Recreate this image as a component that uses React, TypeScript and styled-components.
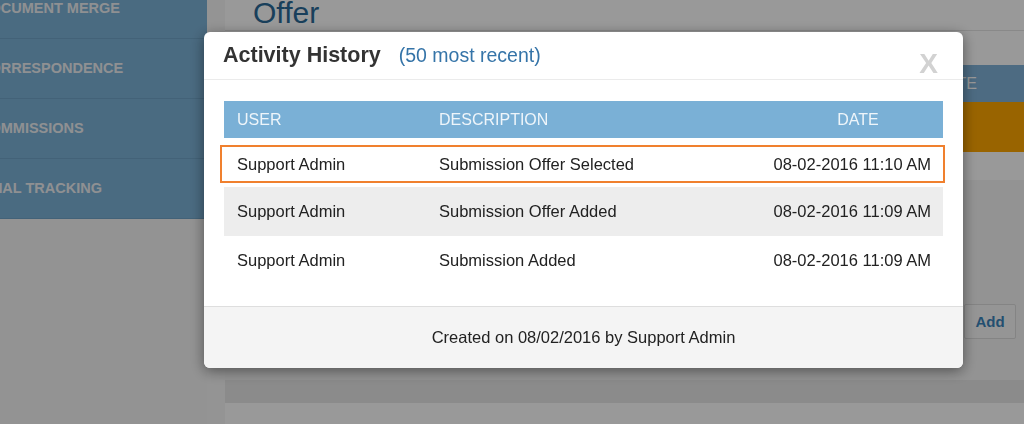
import React from 'react'
import styled, { createGlobalStyle } from 'styled-components'

const GlobalStyle = createGlobalStyle`
  html, body {
    margin: 0;
    padding: 0;
  }

  body {
    font-family: 'Liberation Sans', Arial, sans-serif;
    background: #fff;
    overflow: hidden;
  }
`

const Page = styled.div`
  display: flex;
  width: 1024px;
  height: 424px;
  overflow: hidden;
`

const Sidebar = styled.aside`
  width: 207px;
  flex-shrink: 0;
  background: #f5f5f5;
  overflow: hidden;
`

const NavList = styled.ul`
  list-style: none;
  margin: -21px 0 0;
  padding: 0;
  background: #7cb2d7;
`

const NavItem = styled.li`
  height: 59px;
  line-height: 59px;
  border-bottom: 1px solid #70a4c8;
  color: #eef1f4;
  font-size: 14.5px;
  font-weight: bold;
  text-transform: uppercase;
  white-space: nowrap;
  text-indent: -21px;
`

const Main = styled.main`
  flex: 1;
  display: flex;
  padding-left: 18px;
  background: #f7f7f7;
`

const Content = styled.section`
  flex: 1;
  display: flex;
  flex-direction: column;
  background: #fff;
  overflow: hidden;
`

const TitleBar = styled.header`
  height: 30px;
  padding-left: 28px;
  border-bottom: 1px solid #e4e4e4;
  overflow: hidden;
`

const PageTitle = styled.h1`
  margin: -6px 0 0;
  font-size: 30px;
  line-height: 38px;
  font-weight: normal;
  color: #2b6a98;
`

const OfferTable = styled.div`
  margin: 34px 0 0 28px;
  display: flex;
  flex-direction: column;
`

const OfferHead = styled.div`
  height: 37px;
  display: flex;
  align-items: center;
  justify-content: flex-end;
  padding-right: 47px;
  background: #80b3d9;
  color: #fff;
  font-size: 16px;
`

const OfferRow = styled.div<{ $tone: 'orange' | 'white' }>`
  height: ${p => (p.$tone === 'orange' ? '50px' : '28px')};
  background: ${p => (p.$tone === 'orange' ? '#ffa700' : '#fff')};
`

const Section = styled.div`
  height: 200px;
  display: flex;
  justify-content: flex-end;
  align-items: flex-start;
  padding: 124px 8px 0 0;
  box-sizing: border-box;
  background: #f5f5f5;
`

const AddButton = styled.button`
  width: 52px;
  height: 35px;
  border: 1px solid #dcdcdc;
  border-radius: 2px;
  background: #f9f9f9;
  color: #3b84bb;
  font-family: inherit;
  font-size: 15px;
  font-weight: bold;
`

const Band = styled.div`
  height: 23px;
  background: #e8e8e8;
`

const Backdrop = styled.div`
  position: fixed;
  inset: 0;
  background: rgba(0, 0, 0, 0.4);
`

const Modal = styled.div`
  position: fixed;
  left: 204px;
  top: 32px;
  width: 759px;
  background: #fff;
  border-radius: 6px;
  box-shadow: 0 3px 14px rgba(0, 0, 0, 0.45);
  overflow: hidden;
`

const ModalHeader = styled.div`
  height: 48px;
  box-sizing: border-box;
  display: flex;
  align-items: baseline;
  padding: 12px 25px 0 19px;
  border-bottom: 1px solid #ebebeb;
`

const ModalTitle = styled.h2`
  margin: 0;
  font-size: 21.5px;
  line-height: 22px;
  font-weight: bold;
  color: #333;
`

const ModalSubtitle = styled.span`
  margin-left: 18px;
  font-size: 19.5px;
  color: #3574a8;
`

const CloseButton = styled.button`
  align-self: flex-start;
  margin: 6px 0 0 auto;
  padding: 0;
  border: 0;
  background: none;
  color: #d2d2d2;
  font-family: inherit;
  font-size: 28px;
  line-height: 27px;
  font-weight: bold;
`

const ModalBody = styled.div`
  padding: 21px 20px 21px;
`

const Grid = styled.div`
  display: grid;
  grid-template-columns: 202px 1fr 170px;
  align-items: center;
  font-size: 16.5px;
`

const HeadRow = styled(Grid)`
  height: 37px;
  background: #7ab0d6;
  color: #eef5fa;
  font-size: 16px;
  text-transform: uppercase;
`

type Tone = 'selected' | 'shaded' | 'plain'

const Row = styled(Grid)<{ $tone: Tone }>`
  box-sizing: border-box;
  color: #222;
  height: ${p => (p.$tone === 'selected' ? '38px' : '49px')};
  margin: ${p => (p.$tone === 'selected' ? '7px -2px 4px -4px' : '0')};
  padding-left: ${p => (p.$tone === 'selected' ? '2px' : '0')};
  border: ${p => (p.$tone === 'selected' ? '2px solid #f0802e' : '0')};
  background: ${p => (p.$tone === 'shaded' ? '#ededed' : '#fff')};
`

const Cell = styled.div<{ $align?: 'left' | 'center' | 'right' }>`
  padding: ${p => (p.$align === 'right' ? '0 12px 0 0' : p.$align === 'center' ? '0' : '0 0 0 13px')};
  text-align: ${p => p.$align ?? 'left'};
  white-space: nowrap;
`

const ModalFooter = styled.div`
  height: 61px;
  display: flex;
  align-items: center;
  justify-content: center;
  border-top: 1px solid #dedede;
  background: #f4f4f4;
  color: #222;
  font-size: 16.5px;
`

const navItems = ['Document Merge', 'Correspondence', 'Commissions', 'Final Tracking']

const activity: { user: string; description: string; date: string; tone: Tone }[] = [
  { user: 'Support Admin', description: 'Submission Offer Selected', date: '08-02-2016 11:10 AM', tone: 'selected' },
  { user: 'Support Admin', description: 'Submission Offer Added', date: '08-02-2016 11:09 AM', tone: 'shaded' },
  { user: 'Support Admin', description: 'Submission Added', date: '08-02-2016 11:09 AM', tone: 'plain' },
]

export default function App() {
  return (
    <>
      <GlobalStyle />
      <Page>
        <Sidebar>
          <NavList>
            {navItems.map(item => (
              <NavItem key={item}>{item}</NavItem>
            ))}
          </NavList>
        </Sidebar>
        <Main>
          <Content>
            <TitleBar>
              <PageTitle>Offer</PageTitle>
            </TitleBar>
            <OfferTable>
              <OfferHead>DATE</OfferHead>
              <OfferRow $tone="orange" />
              <OfferRow $tone="white" />
            </OfferTable>
            <Section>
              <AddButton>Add</AddButton>
            </Section>
            <Band />
          </Content>
        </Main>
      </Page>

      <Backdrop />
      <Modal>
        <ModalHeader>
          <ModalTitle>Activity History</ModalTitle>
          <ModalSubtitle>(50 most recent)</ModalSubtitle>
          <CloseButton>X</CloseButton>
        </ModalHeader>
        <ModalBody>
          <HeadRow>
            <Cell>User</Cell>
            <Cell>Description</Cell>
            <Cell $align="center">Date</Cell>
          </HeadRow>
          {activity.map(a => (
            <Row key={a.description} $tone={a.tone}>
              <Cell>{a.user}</Cell>
              <Cell>{a.description}</Cell>
              <Cell $align="right">{a.date}</Cell>
            </Row>
          ))}
        </ModalBody>
        <ModalFooter>Created on 08/02/2016 by Support Admin</ModalFooter>
      </Modal>
    </>
  )
}
